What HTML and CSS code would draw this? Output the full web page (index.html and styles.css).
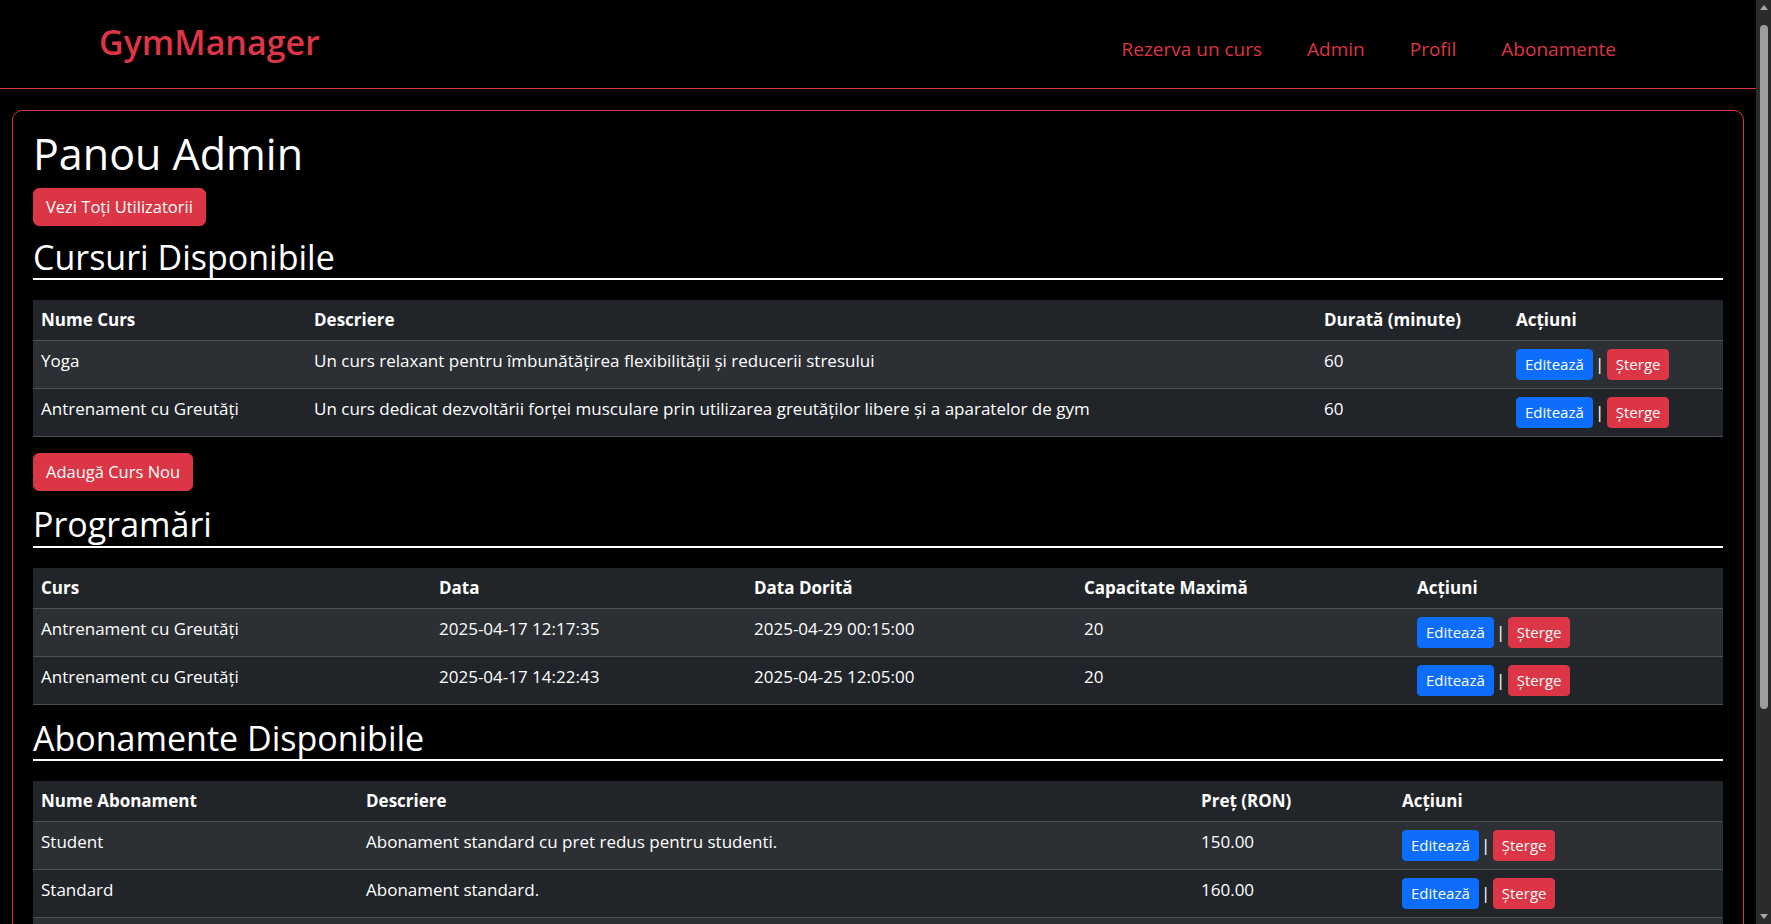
FILE: index.html
```html
<!DOCTYPE html>
<html lang="ro">
<head>
<meta charset="utf-8">
<title>Panou Admin - GymManager</title>
<link rel="stylesheet" href="styles.css">
</head>
<body>
<div class="page">
<header class="navbar">
  <a class="brand" href="#">GymManager</a>
  <nav class="nav">
    <a class="nav-link" href="#">Rezerva un curs</a>
    <a class="nav-link" href="#">Admin</a>
    <a class="nav-link" href="#">Profil</a>
    <a class="nav-link" href="#">Abonamente</a>
  </nav>
</header>

<main class="panel">
  <h1 class="page-title">Panou Admin</h1>
  <div class="top-actions"><a class="btn btn-danger" href="#">Vezi Toți Utilizatorii</a></div>

  <h2 class="section-title">Cursuri Disponibile</h2>
  <table class="table">
    <colgroup>
      <col class="c-course-name"><col class="c-course-desc"><col class="c-course-dur"><col class="c-course-act">
    </colgroup>
    <thead>
      <tr><th>Nume Curs</th><th>Descriere</th><th>Durată (minute)</th><th>Acțiuni</th></tr>
    </thead>
    <tbody>
      <tr>
        <td>Yoga</td>
        <td>Un curs relaxant pentru îmbunătățirea flexibilității și reducerii stresului</td>
        <td>60</td>
        <td><a class="btn btn-sm btn-primary" href="#">Editează</a><span class="sep">|</span><a class="btn btn-sm btn-danger" href="#">Șterge</a></td>
      </tr>
      <tr>
        <td>Antrenament cu Greutăți</td>
        <td>Un curs dedicat dezvoltării forței musculare prin utilizarea greutăților libere și a aparatelor de gym</td>
        <td>60</td>
        <td><a class="btn btn-sm btn-primary" href="#">Editează</a><span class="sep">|</span><a class="btn btn-sm btn-danger" href="#">Șterge</a></td>
      </tr>
    </tbody>
  </table>
  <div class="add-actions"><a class="btn btn-danger" href="#">Adaugă Curs Nou</a></div>

  <h2 class="section-title">Programări</h2>
  <table class="table">
    <colgroup>
      <col class="c-prog-course"><col class="c-prog-date"><col class="c-prog-wish"><col class="c-prog-cap"><col class="c-prog-act">
    </colgroup>
    <thead>
      <tr><th>Curs</th><th>Data</th><th>Data Dorită</th><th>Capacitate Maximă</th><th>Acțiuni</th></tr>
    </thead>
    <tbody>
      <tr>
        <td>Antrenament cu Greutăți</td>
        <td>2025-04-17 12:17:35</td>
        <td>2025-04-29 00:15:00</td>
        <td>20</td>
        <td><a class="btn btn-sm btn-primary" href="#">Editează</a><span class="sep">|</span><a class="btn btn-sm btn-danger" href="#">Șterge</a></td>
      </tr>
      <tr>
        <td>Antrenament cu Greutăți</td>
        <td>2025-04-17 14:22:43</td>
        <td>2025-04-25 12:05:00</td>
        <td>20</td>
        <td><a class="btn btn-sm btn-primary" href="#">Editează</a><span class="sep">|</span><a class="btn btn-sm btn-danger" href="#">Șterge</a></td>
      </tr>
    </tbody>
  </table>

  <h2 class="section-title">Abonamente Disponibile</h2>
  <table class="table">
    <colgroup>
      <col class="c-sub-name"><col class="c-sub-desc"><col class="c-sub-price"><col class="c-sub-act">
    </colgroup>
    <thead>
      <tr><th>Nume Abonament</th><th>Descriere</th><th>Preț (RON)</th><th>Acțiuni</th></tr>
    </thead>
    <tbody>
      <tr>
        <td>Student</td>
        <td>Abonament standard cu pret redus pentru studenti.</td>
        <td>150.00</td>
        <td><a class="btn btn-sm btn-primary" href="#">Editează</a><span class="sep">|</span><a class="btn btn-sm btn-danger" href="#">Șterge</a></td>
      </tr>
      <tr>
        <td>Standard</td>
        <td>Abonament standard.</td>
        <td>160.00</td>
        <td><a class="btn btn-sm btn-primary" href="#">Editează</a><span class="sep">|</span><a class="btn btn-sm btn-danger" href="#">Șterge</a></td>
      </tr>
      <tr>
        <td>Premium</td>
        <td>Abonament premium cu acces nelimitat.</td>
        <td>250.00</td>
        <td><a class="btn btn-sm btn-primary" href="#">Editează</a><span class="sep">|</span><a class="btn btn-sm btn-danger" href="#">Șterge</a></td>
      </tr>
    </tbody>
  </table>
  <div class="add-actions"><a class="btn btn-danger" href="#">Adaugă Abonament Nou</a></div>
</main>
</div>

<div class="scrollbar" aria-hidden="true">
  <span class="sb-up"></span>
  <span class="sb-thumb"></span>
  <span class="sb-down"></span>
</div>
</body>
</html>
```

FILE: styles.css
```css
* { box-sizing: border-box; }

html, body {
  margin: 0;
  padding: 0;
  background: #000;
}

body {
  font-family: "Open Sans", "Liberation Sans", sans-serif;
  font-size: 17px;
  line-height: 24px;
  color: #fff;
}

.page {
  margin-right: 15px;
  padding-bottom: 120px;
}

a { text-decoration: none; }

/* ---------- navbar ---------- */
.navbar {
  display: flex;
  align-items: flex-start;
  justify-content: space-between;
  height: 89px;
  padding: 0 140px 0 99px;
  border-bottom: 1px solid #dc3545;
  background: #000;
}

.brand {
  margin-top: 22px;
  font-size: 34px;
  line-height: 40px;
  font-weight: 600;
  color: #dc3545;
}

.nav {
  display: flex;
  gap: 45px;
  margin-top: 37px;
}

.nav-link {
  font-size: 19px;
  line-height: 24px;
  font-weight: 400;
  color: #dc3545;
}

/* ---------- panel ---------- */
.panel {
  margin: 21px 12px;
  padding: 21px 20px 20px;
  border: 1px solid #dc3545;
  border-radius: 10px;
}

.page-title {
  margin: 0 0 11.4px;
  font-size: 43px;
  line-height: 44.6px;
  font-weight: 500;
}

.top-actions { margin-bottom: 14px; }
.add-actions { margin-bottom: 16px; }

.section-title {
  margin: 0 0 20px;
  padding-bottom: 4px;
  font-size: 34px;
  line-height: 34.5px;
  font-weight: 500;
  border-bottom: 2px solid #fff;
}

/* ---------- buttons ---------- */
.btn {
  display: inline-block;
  padding: 6px 12px;
  font-size: 16.5px;
  line-height: 24px;
  font-weight: 400;
  color: #fff;
  border: 1px solid transparent;
  border-radius: 6px;
  vertical-align: baseline;
}

.btn-sm {
  padding: 4px 8px;
  font-size: 15px;
  line-height: 21px;
  border-radius: 4px;
}

.btn-danger { background: #dc3545; border-color: #dc3545; }
.btn-primary { background: #0d6efd; border-color: #0d6efd; }

.sep {
  display: inline-block;
  width: 14px;
  text-align: center;
  color: #fff;
}

/* ---------- tables ---------- */
.table {
  width: 100%;
  table-layout: fixed;
  border-collapse: collapse;
  margin-bottom: 16px;
  background: #212529;
  color: #fff;
}

.table th,
.table td {
  padding: 8px;
  text-align: left;
  vertical-align: top;
  border-bottom: 1px solid #4d5154;
}

.table th { font-weight: 700; }

.table tbody tr:nth-child(odd) { background: #2c3034; }

.c-course-name { width: 273px; }
.c-course-desc { width: 1010px; }
.c-course-dur  { width: 192px; }
.c-course-act  { width: 215px; }

.c-prog-course { width: 398px; }
.c-prog-date   { width: 315px; }
.c-prog-wish   { width: 330px; }
.c-prog-cap    { width: 333px; }
.c-prog-act    { width: 314px; }

.c-sub-name  { width: 325px; }
.c-sub-desc  { width: 835px; }
.c-sub-price { width: 201px; }
.c-sub-act   { width: 329px; }

/* ---------- window scrollbar (browser chrome) ---------- */
.scrollbar {
  position: fixed;
  top: 0;
  right: 0;
  width: 15px;
  height: 100vh;
  display: flex;
  flex-direction: column;
  align-items: center;
  background: #2b2b2b;
}

.sb-up,
.sb-down {
  width: 0;
  height: 0;
  border-left: 4px solid transparent;
  border-right: 4px solid transparent;
}

.sb-up {
  margin-top: 5px;
  border-bottom: 5px solid #a8a8a8;
}

.sb-thumb {
  width: 8px;
  height: 684px;
  margin-top: 15px;
  border-radius: 4px;
  background: #9e9e9e;
}

.sb-down {
  margin-top: auto;
  margin-bottom: 5px;
  border-top: 5px solid #a8a8a8;
}
```
